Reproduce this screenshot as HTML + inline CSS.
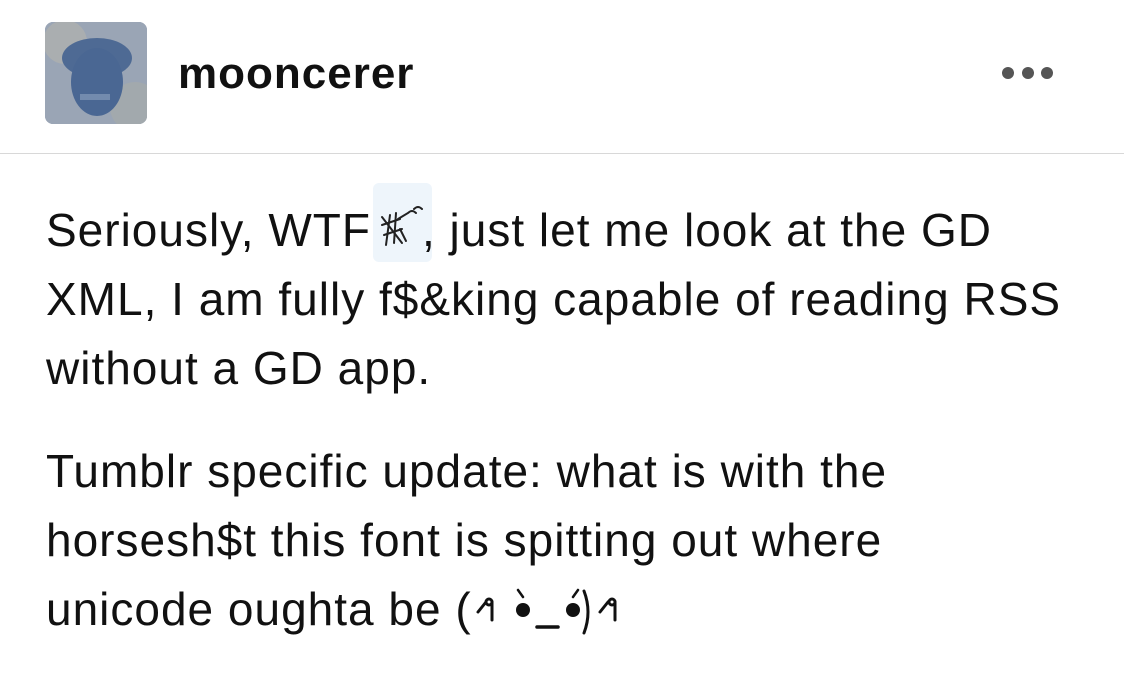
<!DOCTYPE html>
<html><head><meta charset="utf-8"><style>
html,body{margin:0;padding:0;background:#fff;width:1124px;height:683px;overflow:hidden;position:relative;font-family:"Liberation Sans",Arial,sans-serif;color:#000}
.av{position:absolute;left:45px;top:22px;width:102px;height:102px;border-radius:8px;overflow:hidden;background:#8f9bb0}
.name{position:absolute;left:178px;top:52px;font-size:44px;line-height:44px;font-weight:bold;color:#111;letter-spacing:1px}
.dot{position:absolute;top:67px;width:12px;height:12px;border-radius:50%;background:#555}
.sep{position:absolute;left:0;top:153px;width:1124px;height:1px;background:#d8d8d8}
.t{position:absolute;left:46px;font-size:46px;line-height:46px;letter-spacing:1px;white-space:nowrap;color:#111}
.hl{position:absolute;left:373px;top:183px;width:59px;height:79px;background:#eef5fb;border-radius:6px}
</style></head><body>
<div class="av"><svg width="102" height="102" viewBox="0 0 102 102">
<rect width="102" height="102" fill="#9aa5b5"/>
<circle cx="20" cy="20" r="22" fill="#b5b4ad" opacity=".6"/>
<circle cx="90" cy="85" r="25" fill="#a9aca8" opacity=".6"/>
<ellipse cx="52" cy="36" rx="35" ry="20" fill="#4e6a94"/>
<ellipse cx="52" cy="60" rx="26" ry="34" fill="#4a6793"/>
<rect x="35" y="72" width="30" height="6" fill="#8fa3c0" opacity=".6"/>
</svg></div>
<div class="name">mooncerer</div>
<div class="dot" style="left:1002px"></div><div class="dot" style="left:1022px"></div><div class="dot" style="left:1041px"></div>
<div class="sep"></div>
<div class="hl"></div>
<svg style="position:absolute;left:378px;top:205px" width="48" height="45" viewBox="0 0 48 45" fill="none" stroke="#222" stroke-width="2" stroke-linecap="round">
<path d="M4 20 L22 14"/><path d="M6 30 L24 24"/><path d="M12 10 L8 40"/><path d="M18 8 L16 38"/><path d="M4 12 L24 38"/><path d="M20 14 L30 8 Q34 4 38 8"/><path d="M22 24 L28 36"/><path d="M36 4 Q40 0 44 4"/>
</svg>
<div class="t" style="top:207px">Seriously, WTF</div>
<div class="t" style="top:207px;left:422px">, just let me look at the GD</div>
<div class="t" style="top:276px">XML, I am fully f$&amp;king capable of reading RSS</div>
<div class="t" style="top:345px">without a GD app.</div>
<div class="t" style="top:448px">Tumblr specific update: what is with the</div>
<div class="t" style="top:517px">horsesh$t this font is spitting out where</div>
<div class="t" style="top:586px">unicode oughta be (</div>
<svg style="position:absolute;left:0;top:0" width="1124" height="683" fill="none" stroke="#111" stroke-width="3" stroke-linecap="round">
<path d="M478 612 L486 602"/><circle cx="489" cy="602" r="3"/><path d="M492 602 L492 620"/>
<circle cx="523" cy="610" r="7" fill="#111" stroke="none"/><path d="M518 590 L523 597" stroke-width="2.5"/>
<path d="M537 627 L558 627" stroke-width="3.5"/>
<circle cx="573" cy="610" r="7" fill="#111" stroke="none"/><path d="M578 590 L573 597" stroke-width="2.5"/>
<path d="M584 591 Q592 612 584 633" stroke-width="3"/>
<path d="M600 612 L608 602"/><circle cx="612" cy="602" r="3"/><path d="M615 602 L615 620"/>
</svg>
</body></html>
